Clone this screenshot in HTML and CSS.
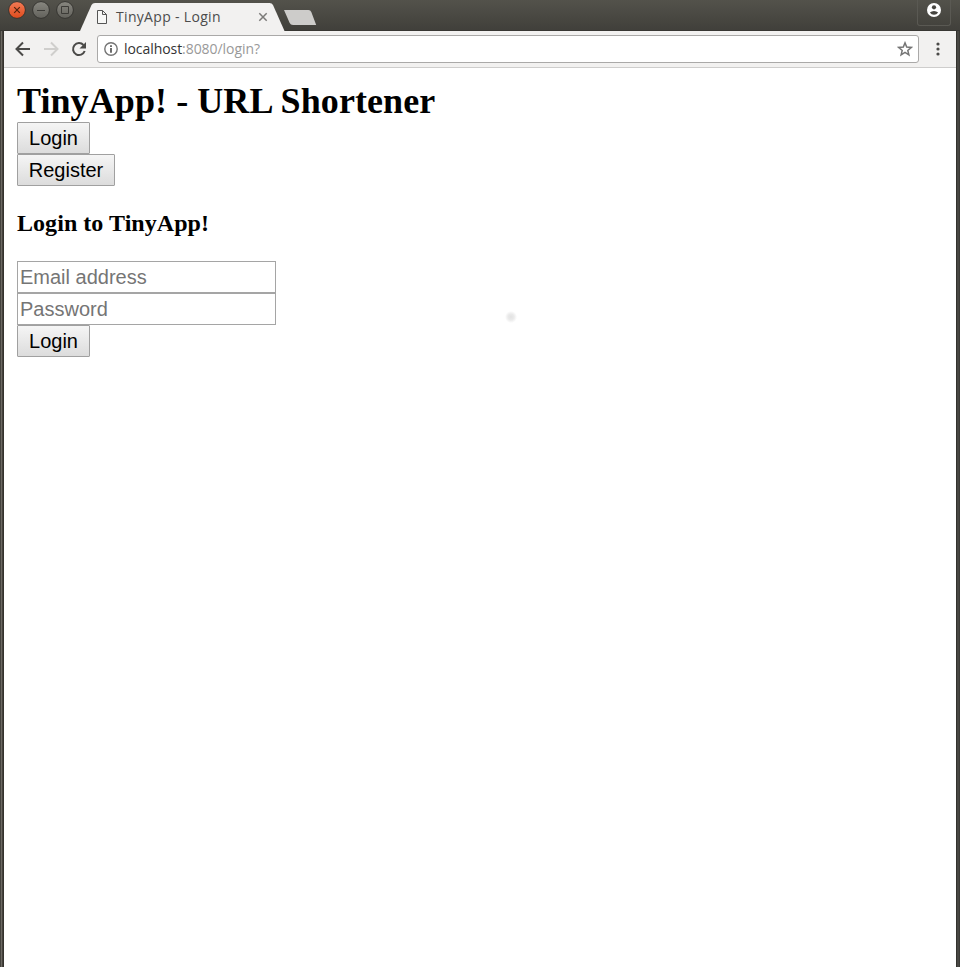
FILE: index.html
```html
<!DOCTYPE html>
<html lang="en">
<head>
<meta charset="utf-8">
<title>TinyApp - Login</title>
<link rel="stylesheet" href="styles.css">
</head>
<body>
<div class="window">
  <header class="titlebar">
    <svg class="controls" width="80" height="31" viewBox="0 0 80 31">
      <defs>
        <linearGradient id="close" x1="0" y1="0" x2="0" y2="1"><stop offset="0" stop-color="#f37b56"/><stop offset="1" stop-color="#df4b1c"/></linearGradient>
        <linearGradient id="gray" x1="0" y1="0" x2="0" y2="1"><stop offset="0" stop-color="#888780"/><stop offset="1" stop-color="#62615b"/></linearGradient>
      </defs>
      <g stroke="#353430">
        <circle cx="17" cy="10" r="8.4" fill="url(#close)"/>
        <circle cx="41" cy="10" r="8.4" fill="url(#gray)"/>
        <circle cx="65" cy="10" r="8.4" fill="url(#gray)"/>
      </g>
      <path d="M14.2 7.2l5.6 5.6M19.8 7.2l-5.6 5.6" stroke="#51230f" stroke-width="1.2"/>
      <path d="M37 10.5h8M61.5 6.5h7v7h-7z" fill="none" stroke="#3c3b37"/>
    </svg>
    <div class="tab">
      <svg class="tab-shape" width="206" height="31" viewBox="0 0 206 31"><path d="M0 31L11.5 5Q12.5 3 15 3H189.500Q192 3 193 5L204.500 31Z" fill="#f2f1f0"/></svg>
      <svg class="page-icon" width="12" height="16" viewBox="0 0 12 16"><path d="M1.500 1.500h5l4 4v9h-9zM6.500 1.500v4h4" fill="#f7f7f6" stroke="#555"/></svg>
      <span class="tab-title">TinyApp - Login</span>
      <svg class="tab-close" width="10" height="10" viewBox="0 0 10 10"><path d="M1.300 1.300l7.400 7.400M8.700 1.300L1.300 8.700" stroke="#7b7a78" stroke-width="1.500"/></svg>
    </div>
    <svg class="new-tab" width="34" height="31" viewBox="0 0 34 31"><path d="M0 10H24.500Q26.500 10 27.300 12L32.200 25H9Q6.500 25 5.700 23Z" fill="#cdccca"/></svg>
    <div class="profile">
      <svg width="14" height="14" viewBox="0 0 14 14"><circle cx="7" cy="7" r="7" fill="#fff"/><circle cx="7" cy="4.300" r="2.100" fill="#464540"/><path d="M2.900 9.600Q4.500 7.900 7 7.900T11.100 9.600Q9.700 11.800 7 11.800T2.900 9.600Z" fill="#464540"/></svg>
    </div>
  </header>
  <nav class="toolbar">
    <svg class="nav-icons" width="84" height="36" viewBox="4 31 84 36" fill="none" stroke-width="2">
      <path d="M30 49H17M23 42.500L16.500 49L23 55.500" stroke="#4b4a48"/>
      <path d="M44 49H57M51 42.500L57.500 49L51 55.500" stroke="#cfcecc"/>
      <path d="M83.500 45A6 6 0 1 0 84.700 51" stroke="#4b4a48"/>
      <path d="M86 42V48.500H79.500Z" fill="#4b4a48"/>
    </svg>
    <div class="address">
      <svg class="info" width="14" height="14" viewBox="0 0 14 14"><circle cx="7" cy="7" r="6.200" fill="none" stroke="#747474" stroke-width="1.400"/><path d="M7 3.200v1.700M7 6v4.800" stroke="#666" stroke-width="1.900"/></svg>
      <span class="url"><span class="host">localhost</span>:8080/login?</span>
      <svg class="star" width="16" height="16" viewBox="0 0 16 16"><path d="M8 1.900L9.700 6.100L14.300 6.400L10.800 9.400L11.900 13.800L8 11.400L4.100 13.800L5.200 9.400L1.700 6.400L6.300 6.100Z" fill="none" stroke="#757575" stroke-width="1.500"/></svg>
    </div>
    <svg class="menu" width="4" height="14" viewBox="0 0 4 14" fill="#4b4a48"><circle cx="2" cy="2" r="1.600"/><circle cx="2" cy="7" r="1.600"/><circle cx="2" cy="12" r="1.600"/></svg>
  </nav>
  <main class="page">
    <h1>TinyApp! - URL Shortener</h1>
    <button class="btn login">Login</button>
    <button class="btn register">Register</button>
    <h2>Login to TinyApp!</h2>
    <form>
      <input type="email" placeholder="Email address">
      <input type="password" placeholder="Password">
      <button class="btn login" type="button">Login</button>
    </form>
    <span class="spot"></span>
  </main>
</div>
</body>
</html>
```
FILE: styles.css
```css
* { box-sizing: border-box; }
body { margin: 0; background: #fff; overflow: hidden; }
.window {
  position: relative;
  height: 967px;
  display: flex;
  flex-direction: column;
  padding: 0 4px;
  background: linear-gradient(90deg, #45433e 0 1px, #6c6963 1px 2px, #45423d 2px 3px, #35322e 3px 4px, transparent 4px 956px, #33322e 956px 957px, #484743 957px 959px, #3c3b37 959px);
}
.titlebar {
  height: 31px;
  flex: none;
  display: flex;
  margin: 0 -4px;
  background: linear-gradient(#53524b, #403f3a);
  box-shadow: inset 0 -1px #383733;
}
.controls, .tab, .new-tab { flex: none; }
.tab {
  position: relative;
  width: 206px;
  height: 31px;
  display: flex;
  align-items: center;
  padding: 3px 18px 0 16px;
  font: 14px/20px "Open Sans", sans-serif;
  color: #4c4c4c;
}
.tab-shape { position: absolute; left: 0; top: 0; }
.page-icon, .tab-title, .tab-close { position: relative; flex: none; }
.tab-title { margin-left: 8px; width: 105px; white-space: nowrap; letter-spacing: .32px; }
.tab-close { margin-left: 37px; }
.new-tab { margin-left: -2px; }
.profile {
  width: 34px;
  height: 26px;
  margin-left: auto;
  margin-right: 9px;
  padding: 3px 0 0 9px;
  border: 1px solid #5a5953;
  border-top: 0;
  border-radius: 0 0 3px 3px;
}
.profile svg { display: block; }
.toolbar {
  height: 37px;
  flex: none;
  display: flex;
  align-items: center;
  background: #f2f1f0;
  border-bottom: 1px solid #cecdcc;
}
.nav-icons { flex: none; }
.address {
  display: flex;
  align-items: center;
  width: 822px;
  height: 28px;
  margin-left: 9px;
  padding: 0 5px 0 6px;
  background: #fff;
  border: 1px solid #aaa9a8;
  border-radius: 3px;
}
.url {
  margin-left: 6px;
  font: 14px/20px "Open Sans", sans-serif;
  letter-spacing: -.06px;
  color: #999;
}
.host { color: #333; }
.star { margin-left: auto; }
.menu { margin-left: 16.5px; }
.page {
  position: relative;
  flex: 1;
  padding: 12px 13px;
  background: #fff;
}
h1, h2 { margin: 0; font-family: "Liberation Serif", serif; color: #000; }
h1 { font-size: 36px; line-height: 42px; letter-spacing: .08px; }
h2 { margin: 23px 0 24px; font-size: 24px; line-height: 28px; letter-spacing: .05px; }
.btn {
  display: block;
  height: 32px;
  padding: 0;
  font: 20px/28px "Liberation Sans", sans-serif;
  color: #000;
  background: linear-gradient(#f5f5f5, #dcdcdc);
  border: 1px solid #a0a0a0;
  border-radius: 1px;
}
.login { width: 73px; }
.register { width: 98px; }
input {
  display: block;
  width: 259px;
  height: 32px;
  padding: 2px;
  border: 1px solid #a5a5a5;
  background: #fff;
  font: 20px "Liberation Sans", sans-serif;
}
input::placeholder { color: #757575; }
.spot {
  position: absolute;
  left: 501px;
  top: 243px;
  width: 12px;
  height: 12px;
  background: radial-gradient(closest-side, #e2e2e2, #eaeaea 50%, #fff);
}
```
